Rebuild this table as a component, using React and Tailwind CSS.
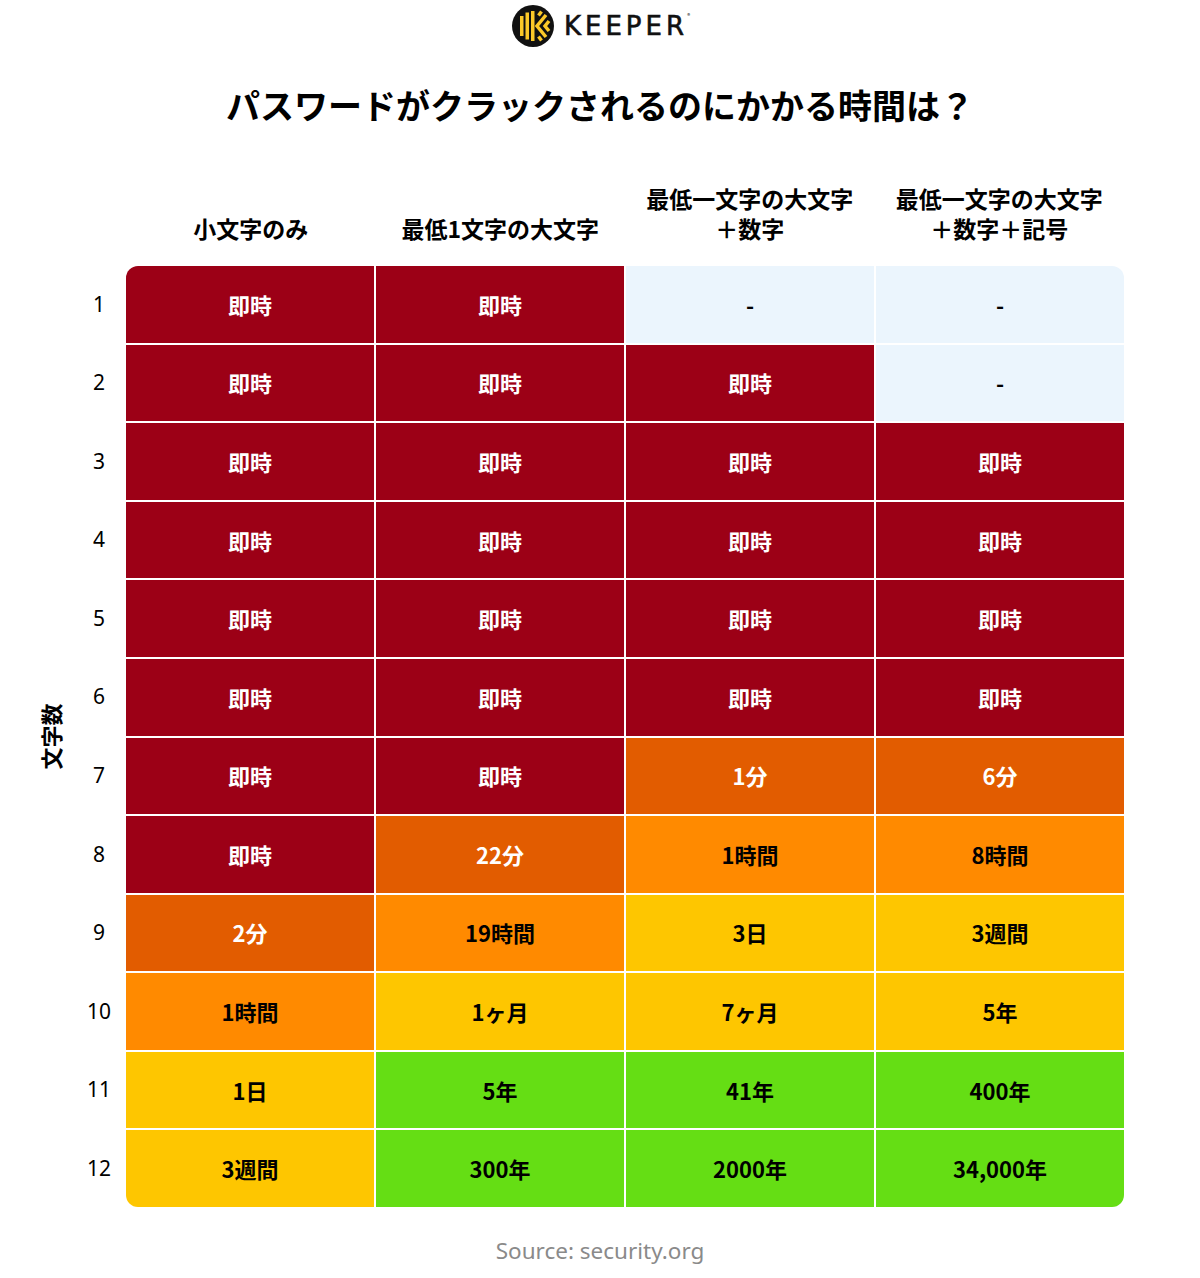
const FONT = { fontFamily: '"Noto Sans CJK JP", "Noto Sans", sans-serif' }

const COLS = ['小文字のみ', '最低1文字の大文字', '最低一文字の大文字\n＋数字', '最低一文字の大文字\n＋数字＋記号']

// tone -> cell classes
const TONES = {
  r: 'bg-[#9c0016] text-white',
  d: 'bg-[#e25c00] text-white',
  o: 'bg-[#ff8a00] text-black',
  y: 'bg-[#fec600] text-black',
  g: 'bg-[#65de14] text-black',
  n: 'bg-[#ebf5fd] text-black',
}

const ROWS = [
  [['r', '即時'], ['r', '即時'], ['n', '-'], ['n', '-']],
  [['r', '即時'], ['r', '即時'], ['r', '即時'], ['n', '-']],
  [['r', '即時'], ['r', '即時'], ['r', '即時'], ['r', '即時']],
  [['r', '即時'], ['r', '即時'], ['r', '即時'], ['r', '即時']],
  [['r', '即時'], ['r', '即時'], ['r', '即時'], ['r', '即時']],
  [['r', '即時'], ['r', '即時'], ['r', '即時'], ['r', '即時']],
  [['r', '即時'], ['r', '即時'], ['d', '1分'], ['d', '6分']],
  [['r', '即時'], ['d', '22分'], ['o', '1時間'], ['o', '8時間']],
  [['d', '2分'], ['o', '19時間'], ['y', '3日'], ['y', '3週間']],
  [['o', '1時間'], ['y', '1ヶ月'], ['y', '7ヶ月'], ['y', '5年']],
  [['y', '1日'], ['g', '5年'], ['g', '41年'], ['g', '400年']],
  [['y', '3週間'], ['g', '300年'], ['g', '2000年'], ['g', '34,000年']],
]

function KeeperMark() {
  return (
    <svg width="42" height="42" viewBox="0 0 42 42">
      <circle cx="21" cy="21" r="21" fill="#111" />
      <g fill="#fcc928">
        <rect x="8" y="11" width="3.5" height="20" />
        <rect x="13.5" y="7.5" width="3.5" height="27" />
        <rect x="19" y="6" width="3.5" height="30" />
      </g>
      <g stroke="#fcc928" strokeWidth="3.5" fill="none">
        <polyline points="34,10 25,21 34,32" />
        <polyline points="29.5,6.5 26.5,10.5" />
        <polyline points="37,16 33,21 37,26" />
        <polyline points="29.5,35.5 26.5,31.5" />
      </g>
    </svg>
  )
}

export default function App() {
  return (
    <div className="w-[1200px] h-[1278px] bg-white flex flex-col items-center text-black" style={FONT}>
      {/* Logo */}
      <div className="h-[50px] flex items-center gap-[10px] pt-[2px]">
        <KeeperMark />
        <div className="relative">
          <span
            className="text-[26px] font-normal tracking-[4px] text-[#111]"
            style={{ fontFamily: '"DejaVu Sans", sans-serif', WebkitTextStroke: '0.6px #111' }}
          >
            KEEPER
          </span>
          <span className="absolute -right-[2px] top-[4px] text-[6px]">®</span>
        </div>
      </div>

      {/* Title */}
      <h1 className="mt-[35px] text-[34px] leading-[40px] font-bold">パスワードがクラックされるのにかかる時間は？</h1>

      {/* Column headers */}
      <div className="w-full pl-[126px] pr-[76px] h-[118px] grid grid-cols-4 items-end">
        {COLS.map((c) => (
          <div key={c} className="text-center text-[23px] leading-[30px] font-bold whitespace-pre-line">
            {c}
          </div>
        ))}
      </div>

      {/* Table */}
      <div className="w-full mt-[23px] flex pl-[30px]">
        <div className="w-[40px] flex items-center justify-center">
          <span className="-rotate-90 whitespace-nowrap text-[22px] font-bold">文字数</span>
        </div>
        <div className="w-[58px] h-[941px] grid grid-rows-12 gap-[2px]">
          {ROWS.map((_, i) => (
            <div key={i} className="flex items-center justify-center text-[21px]" style={{ fontFamily: '"Noto Sans", sans-serif' }}>
              {i + 1}
            </div>
          ))}
        </div>
        <div className="w-[998px] -ml-[2px] h-[941px] rounded-[12px] overflow-hidden bg-white grid grid-cols-4 grid-rows-12 gap-[2px]">
          {ROWS.flatMap((row, i) =>
            row.map(([t, v], j) => (
              <div key={`${i}-${j}`} className={`flex items-center justify-center text-[22px] font-bold ${TONES[t]}`}>
                {v}
              </div>
            ))
          )}
        </div>
      </div>

      {/* Source */}
      <p className="mt-[29px] text-[22.5px] leading-[30px] text-[#8a8a8a]" style={{ fontFamily: '"Noto Sans", sans-serif' }}>
        Source: security.org
      </p>
    </div>
  )
}
